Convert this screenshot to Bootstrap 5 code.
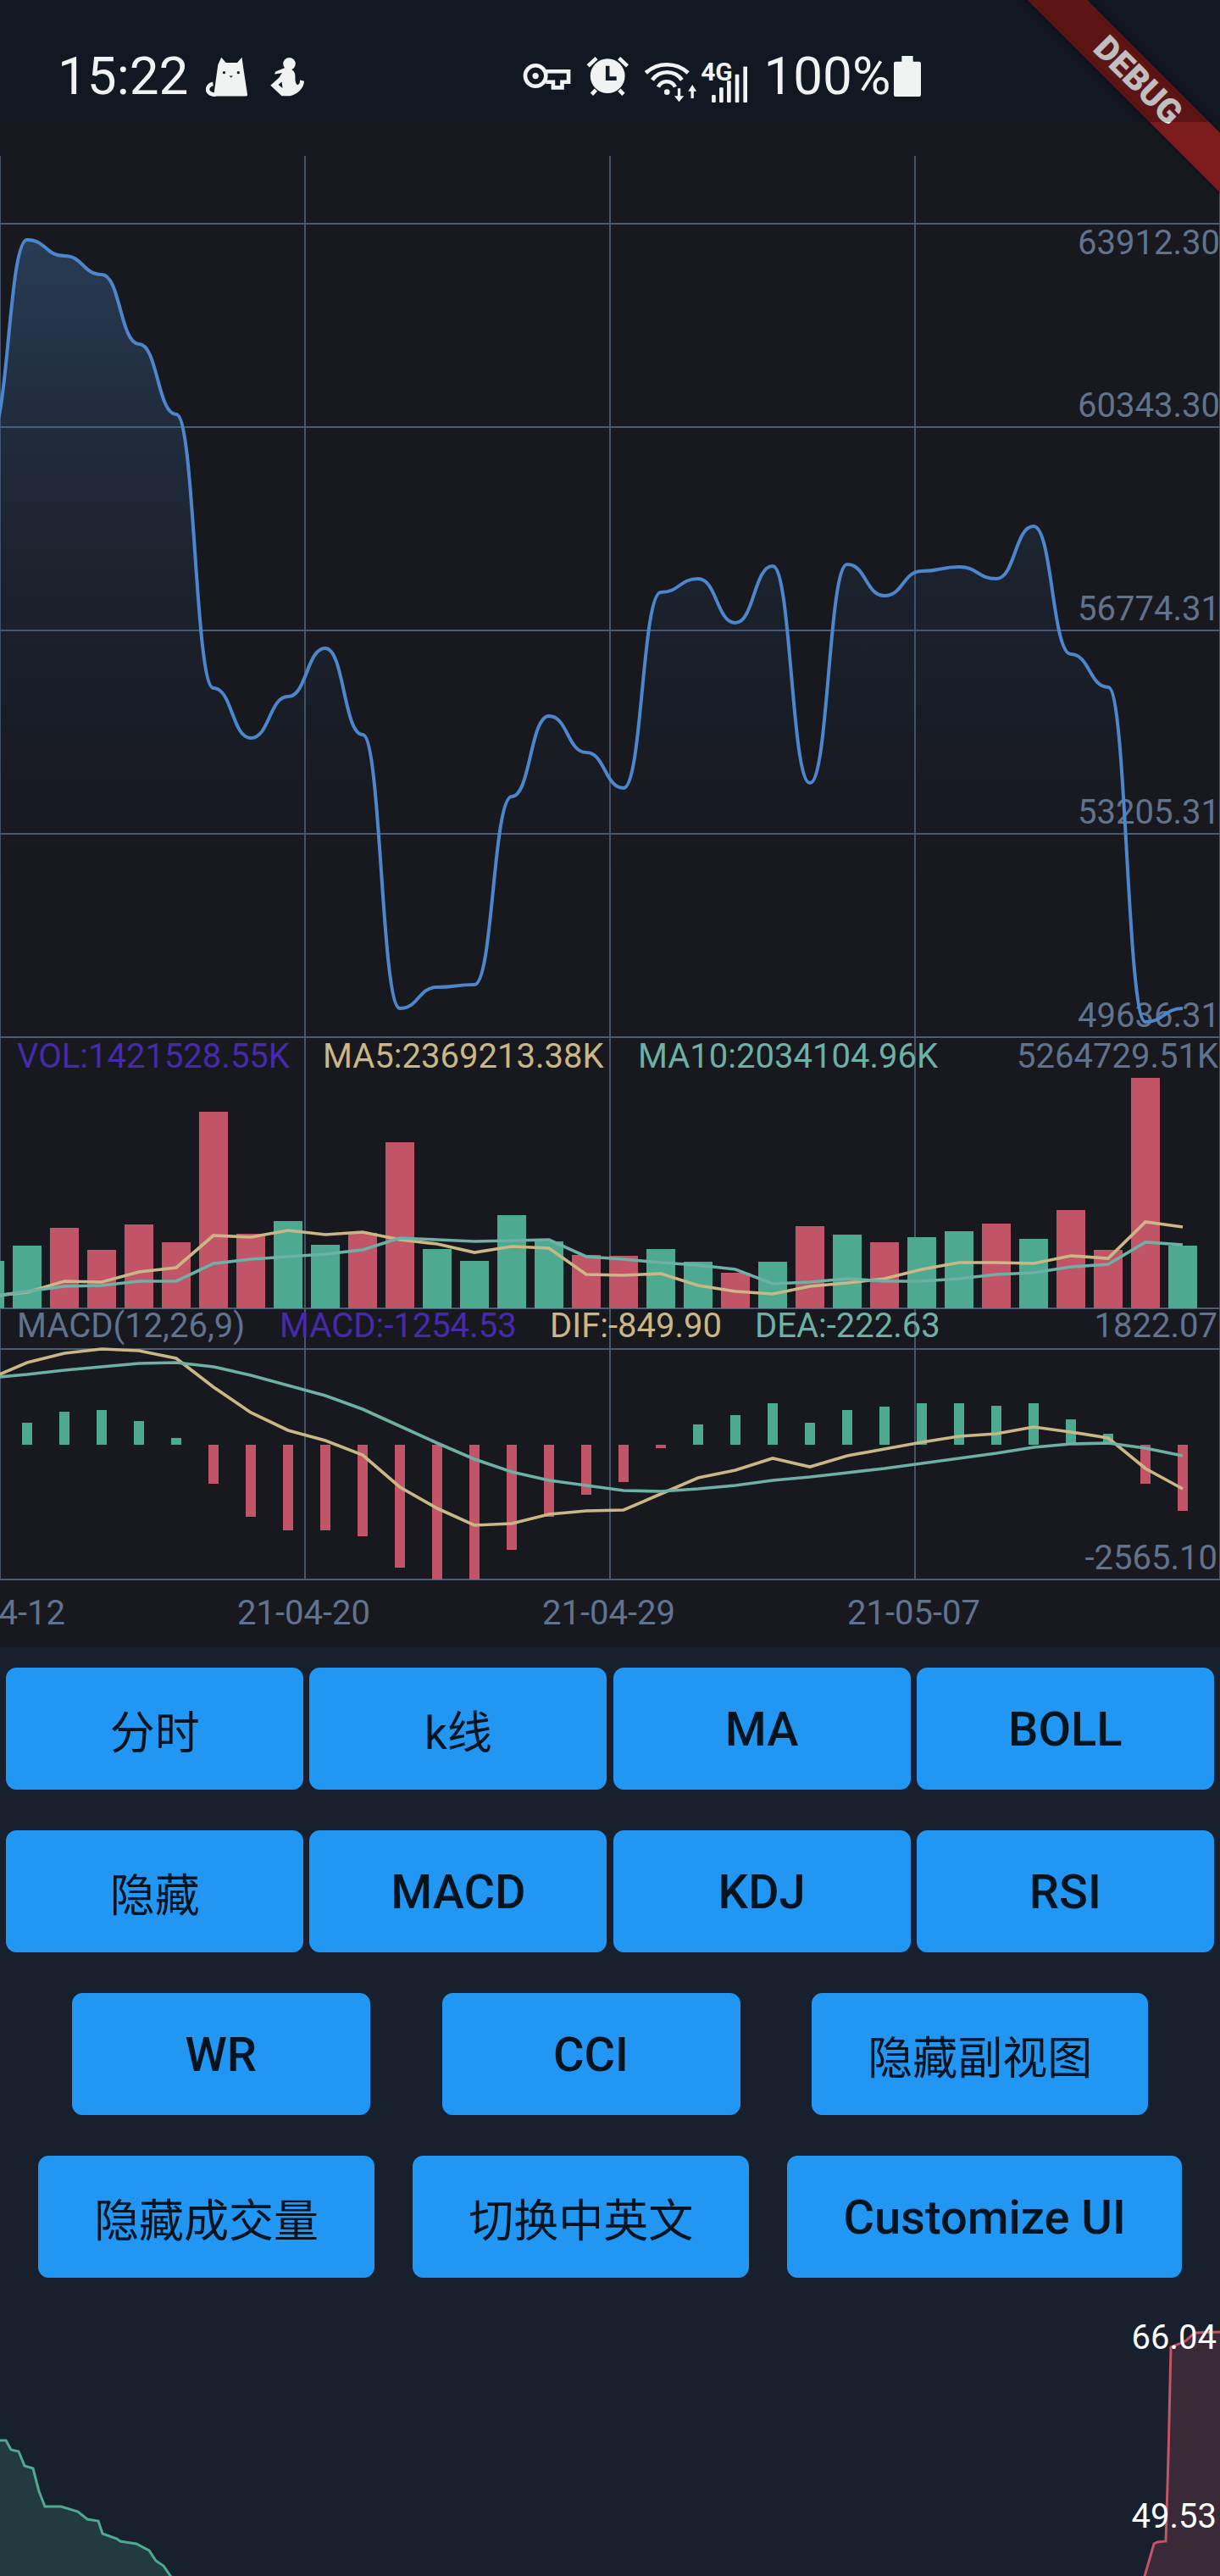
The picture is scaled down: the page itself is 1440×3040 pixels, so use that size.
<!DOCTYPE html>
<html lang="zh-CN">
<head>
    <meta charset="UTF-8">
    <meta name="viewport" content="width=device-width, initial-scale=1.0">
    <title>K Chart</title>
    <link href="https://cdn.jsdelivr.net/npm/bootstrap@5.3.3/dist/css/bootstrap.min.css" rel="stylesheet">
    <style>
        body {
            background-color: #18202e;
            margin: 0;
            font-family: Roboto, "Noto Sans CJK SC", sans-serif;
        }

        .app-shell {
            width: 1440px;
            height: 3040px;
            overflow: hidden;
        }

        /* Status bar is a scrim over the page, the ribbon sits below it */
        .status-row {
            height: 144px;
            padding: 36px 0 0 68px;
            background-color: rgba(0, 0, 0, .25);
            color: #f1f2f2;
            z-index: 3;
        }

        .status-text {
            font-size: 62px;
            line-height: 1;
        }

        .status-row svg {
            display: block;
            fill: #f1f2f2;
        }

        .ico-stroke {
            fill: none !important;
            stroke: #f1f2f2;
            stroke-width: 14;
        }

        .net-label {
            font-size: 90px;
            font-weight: 700;
        }

        .ico-cat { width: 50px; height: 49px; margin-left: 21px; }
        .ico-yoga { width: 41px; height: 47px; margin-left: 26px; }
        .ico-key { width: 57px; height: 32px; margin-left: 257px; }
        .ico-alarm { width: 52px; height: 48px; margin-left: 18px; }
        .ico-net { width: 123px; height: 56px; margin: 7px 18px 0 16px; }
        .ico-battery { width: 32px; height: 48px; margin-left: 4px; }

        /* Debug ribbon */
        .debug-ribbon {
            left: 1143px;
            top: 70px;
            width: 400px;
            height: 50px;
            transform: rotate(45deg);
            background-color: #7c1b1c;
            box-shadow: 0 0 6px rgba(0, 0, 0, .5);
            color: #fff;
            font-size: 40px;
            font-weight: 900;
            line-height: 50px;
            text-align: center;
            z-index: 2;
        }

        /* K line chart */
        .kline-chart {
            display: block;
            width: 1440px;
            height: 1800px;
            background-color: #18191e;
        }

        .kline-chart text,
        .depth-chart text {
            font-family: Roboto, sans-serif;
            font-size: 40px;
        }

        .grid-line { stroke: #4c5c74; stroke-width: 1.8; }
        .main-line { fill: none; stroke: #4c86cd; stroke-width: 4; }
        .ma5-line { fill: none; stroke: #c9b885; stroke-width: 3.7; }
        .ma10-line { fill: none; stroke: #6cb0a6; stroke-width: 3.7; }

        .bar-up { fill: #c15466; }
        .bar-down { fill: #4daa90; }

        .t-gray { fill: #60738e; }
        .t-vol { fill: #4729ae; }
        .t-ma5 { fill: #c9b885; }
        .t-ma10 { fill: #6cb0a6; }

        /* Buttons */
        .btn-area {
            padding-top: 24px;
        }

        .btn-row {
            height: 144px;
            margin-bottom: 48px;
        }

        .btn-row-even {
            gap: 7.3px;
            padding: 0 7.3px;
        }

        .btn-kline {
            --bs-btn-bg: #2196f3;
            --bs-btn-border-color: #2196f3;
            --bs-btn-color: #04141f;
            --bs-btn-hover-bg: #2196f3;
            --bs-btn-hover-border-color: #2196f3;
            --bs-btn-hover-color: #04141f;
            --bs-btn-border-radius: 12px;
            min-width: 352px;
            padding: 2px 65px 0;
            font-size: 56px;
            font-weight: 500;
            line-height: 1;
        }

        .btn-row-even .btn-kline {
            min-width: 0;
            flex: 1 1 0;
            padding: 2px 0 0;
        }

        .btn-kline.cjk-label,
        .btn-row-even .btn-kline.cjk-label {
            font-size: 53px;
            font-weight: 400;
            padding-top: 13px;
        }

        /* Depth chart */
        .depth-chart {
            display: block;
            width: 1440px;
            height: 352px;
        }

        .depth-buy { fill: rgba(77, 170, 144, .2); stroke: #4daa90; stroke-width: 3; }
        .depth-sell { fill: rgba(193, 84, 102, .2); stroke: #c15466; stroke-width: 3; }
    </style>
</head>
<body>
<div class="app-shell position-relative">

    <!-- Status bar -->
    <div class="status-row position-relative d-flex align-items-center">
        <span class="status-text">15:22</span>
        <svg class="ico-cat" viewBox="604 100 154 146">
            <path d="M660 103L677 122H718L735 103L740 140L755 238Q756 244 750 244H640Q632 244 633 238L648 130Z"/>
            <path class="ico-stroke" d="M640 238C618 240 606 225 612 212C615 205 622 200 630 199"/>
            <circle cx="670" cy="158" r="5" fill="#121a24"/>
            <circle cx="722" cy="158" r="5" fill="#121a24"/>
            <path d="M689 170H702L696 177Z" fill="#121a24"/>
        </svg>
        <svg class="ico-yoga" viewBox="838 103 122 142">
            <circle cx="905" cy="128" r="22"/>
            <path d="M892 146C915 142 928 155 926 178C925 190 930 205 936 203C942 200 943 192 943 186L958 190C957 215 935 236 908 243H878L838 205L868 178L880 160Z"/>
            <path d="M893 141L856 156L852 165L888 160Z"/>
            <path d="M866 203L878 192L881 215Z" fill="#121a24"/>
        </svg>
        <svg class="ico-key" viewBox="50 126 171 97">
            <circle class="ico-stroke" cx="95" cy="173" r="37"/>
            <circle cx="95" cy="173" r="11"/>
            <path class="ico-stroke" d="M132 157H213V195H190V215H158V195H132"/>
        </svg>
        <svg class="ico-alarm" viewBox="277 100 155 146">
            <circle cx="352" cy="172" r="62"/>
            <path d="M345 136H359V174H384V188H345Z" fill="#121a24"/>
            <path class="ico-stroke" d="M282 136L312 108M393 108L423 136M295 238L310 222M409 238L394 222"/>
        </svg>
        <svg class="ico-net" viewBox="480 80 370 168">
            <path class="ico-stroke" d="M487 140A110 110 0 0 1 637 140M510 165A64 64 0 0 1 615 165M531 190A33 33 0 0 1 591 190"/>
            <circle cx="562" cy="208" r="10"/>
            <path d="M600 195H610V222H622L605 243L588 222H600Z"/>
            <path d="M647 230H657V205H667L652 182L637 205H647Z"/>
            <text class="net-label" x="682" y="168" fill="#f1f2f2">4G</text>
            <rect x="721" y="218" width="14" height="27" rx="3"/>
            <rect x="748" y="192" width="14" height="53" rx="3"/>
            <rect x="775" y="168" width="14" height="77" rx="3"/>
            <rect x="804" y="145" width="14" height="100" rx="3"/>
            <rect x="833" y="117" width="14" height="128" rx="3"/>
        </svg>
        <span class="status-text">100%</span>
        <svg class="ico-battery" viewBox="1365 102 96 144">
            <path d="M1393 102H1433V122H1455Q1461 122 1461 128V240Q1461 246 1455 246H1371Q1365 246 1365 240V128Q1365 122 1371 122H1393Z"/>
        </svg>
    </div>

    <div class="debug-ribbon position-absolute">DEBUG</div>

    <!-- K line chart -->
    <svg class="kline-chart" viewBox="0 144 1440 1800">
        <defs>
            <linearGradient id="mainShade" gradientUnits="userSpaceOnUse" x1="0" y1="264" x2="0" y2="1224">
                <stop offset="0" stop-color="#4c86cd" stop-opacity=".33"/>
                <stop offset="1" stop-color="#000" stop-opacity="0"/>
            </linearGradient>
        </defs>
        <g id="gridLayer"></g>
        <path id="mainArea" fill="url(#mainShade)"/>

        <text class="t-gray" x="1440" y="300" text-anchor="end">63912.30</text>
        <text class="t-gray" x="1440" y="492" text-anchor="end">60343.30</text>
        <text class="t-gray" x="1440" y="732" text-anchor="end">56774.31</text>
        <text class="t-gray" x="1440" y="972" text-anchor="end">53205.31</text>
        <text class="t-gray" x="1440" y="1212" text-anchor="end">49636.31</text>

        <path id="mainLine" class="main-line"/>

        <text class="t-vol" x="20" y="1260">VOL:1421528.55K</text>
        <text class="t-ma5" x="381" y="1260">MA5:2369213.38K</text>
        <text class="t-ma10" x="753" y="1260">MA10:2034104.96K</text>
        <text class="t-gray" x="1438" y="1260" text-anchor="end">5264729.51K</text>

        <text class="t-gray" x="20" y="1578">MACD(12,26,9)</text>
        <text class="t-vol" x="330" y="1578">MACD:-1254.53</text>
        <text class="t-ma5" x="649" y="1578">DIF:-849.90</text>
        <text class="t-ma10" x="891" y="1578">DEA:-222.63</text>
        <text class="t-gray" x="1437" y="1578" text-anchor="end">1822.07</text>
        <text class="t-gray" x="1437" y="1852" text-anchor="end">-2565.10</text>

        <g id="volBars"></g>
        <polyline id="volMa5" class="ma5-line"/>
        <polyline id="volMa10" class="ma10-line"/>
        <g id="macdBars"></g>
        <polyline id="macdDif" class="ma5-line"/>
        <polyline id="macdDea" class="ma10-line"/>

        <text class="t-gray" x="77" y="1917" text-anchor="end">4-12</text>
        <text class="t-gray" x="358.5" y="1917" text-anchor="middle">21-04-20</text>
        <text class="t-gray" x="718.5" y="1917" text-anchor="middle">21-04-29</text>
        <text class="t-gray" x="1078.5" y="1917" text-anchor="middle">21-05-07</text>
    </svg>

    <!-- Buttons -->
    <div class="btn-area">
        <div class="btn-row btn-row-even d-flex">
            <button type="button" class="btn btn-kline cjk-label">分时</button>
            <button type="button" class="btn btn-kline cjk-label">k线</button>
            <button type="button" class="btn btn-kline">MA</button>
            <button type="button" class="btn btn-kline">BOLL</button>
        </div>
        <div class="btn-row btn-row-even d-flex">
            <button type="button" class="btn btn-kline cjk-label">隐藏</button>
            <button type="button" class="btn btn-kline">MACD</button>
            <button type="button" class="btn btn-kline">KDJ</button>
            <button type="button" class="btn btn-kline">RSI</button>
        </div>
        <div class="btn-row d-flex justify-content-evenly">
            <button type="button" class="btn btn-kline">WR</button>
            <button type="button" class="btn btn-kline">CCI</button>
            <button type="button" class="btn btn-kline cjk-label">隐藏副视图</button>
        </div>
        <div class="btn-row d-flex justify-content-evenly mb-0">
            <button type="button" class="btn btn-kline cjk-label">隐藏成交量</button>
            <button type="button" class="btn btn-kline cjk-label">切换中英文</button>
            <button type="button" class="btn btn-kline">Customize UI</button>
        </div>
    </div>

    <!-- Depth chart -->
    <svg class="depth-chart" viewBox="0 2688 1440 352">
        <path class="depth-buy" d="M-4 3044V2880H7L13 2891L22 2893L29 2910L39 2913L46 2940L53 2958H72L92 2964L103 2973L116 2975L121 2990L138 2996L142 2999L161 3002L176 3010L184 3022L193 3028L204 3044Z"/>
        <path class="depth-sell" d="M1350 3044L1362 3002L1366 3000L1376 2999L1379 2900L1382 2770L1392 2766L1400 2762L1410 2753L1444 2752V3044Z"/>
        <text x="1436" y="2772" text-anchor="end" fill="#fff">66.04</text>
        <text x="1436" y="2983" text-anchor="end" fill="#fff">49.53</text>
    </svg>
</div>

<script src="https://cdn.jsdelivr.net/npm/bootstrap@5.3.3/dist/js/bootstrap.bundle.min.js"></script>
<script>
    const SVG_NS = 'http://www.w3.org/2000/svg';

    // Candles sit every 44px, the first one starts off screen
    const xAt = (i) => -12 + 44 * i;

    const closeY = [515, 283, 302, 324, 406, 489, 812, 871, 822, 765, 867, 1190, 1165, 1162, 940, 845, 888,
        930, 699, 683, 735, 668, 924, 666, 703, 674, 669, 683, 621, 772, 811, 1206, 1190];

    const volTop = [1488, 1470, 1449, 1475, 1445, 1466, 1312, 1456, 1441, 1469, 1455, 1348, 1474, 1488, 1434, 1465, 1481,
        1482, 1474, 1489, 1502, 1489, 1447, 1457, 1466, 1460, 1453, 1444, 1462, 1428, 1475, 1272, 1470];
    const volUp = [0, 0, 1, 1, 1, 1, 1, 1, 0, 0, 1, 1, 0, 0, 0, 0, 1,
        1, 0, 0, 1, 0, 1, 0, 1, 0, 0, 1, 0, 1, 1, 1, 0];
    const volMa5 = [1530, 1525, 1512, 1513, 1501, 1496, 1458, 1460, 1452, 1457, 1454, 1463, 1468, 1478, 1471, 1473, 1504,
        1505, 1503, 1517, 1524, 1527, 1518, 1514, 1509, 1498, 1490, 1490, 1491, 1482, 1485, 1442, 1448];
    const volMa10 = [1530, 1524, 1518, 1517, 1512, 1512, 1491, 1486, 1483, 1480, 1475, 1461, 1463, 1465, 1464, 1463, 1483,
        1486, 1490, 1493, 1498, 1515, 1513, 1509, 1512, 1512, 1509, 1504, 1502, 1495, 1492, 1466, 1469];

    // End of each MACD bar, it starts from the zero line
    const MACD_ZERO = 1705;
    const macdEnd = [1705, 1679, 1666, 1664, 1677, 1697, 1751, 1790, 1806, 1806, 1813, 1850, 1864, 1864, 1829, 1790, 1764,
        1749, 1709, 1681, 1670, 1656, 1679, 1664, 1660, 1656, 1656, 1659, 1656, 1675, 1692, 1751, 1783];
    const macdDif = [1627, 1608, 1597, 1592, 1594, 1603, 1637, 1667, 1688, 1700, 1717, 1755, 1780, 1800, 1798, 1787, 1783,
        1782, 1763, 1744, 1735, 1721, 1731, 1718, 1710, 1702, 1695, 1692, 1684, 1690, 1697, 1733, 1757];
    const macdDea = [1626, 1622, 1617, 1613, 1609, 1608, 1613, 1623, 1635, 1647, 1663, 1683, 1703, 1722, 1737, 1747, 1753,
        1759, 1760, 1757, 1753, 1747, 1743, 1738, 1733, 1727, 1721, 1715, 1708, 1704, 1703, 1709, 1718];

    function addRect(parent, x, y, w, h, cls) {
        const r = document.createElementNS(SVG_NS, 'rect');
        r.setAttribute('x', x);
        r.setAttribute('y', y);
        r.setAttribute('width', w);
        r.setAttribute('height', h);
        r.setAttribute('class', cls);
        parent.appendChild(r);
    }

    function addLine(parent, x1, y1, x2, y2) {
        const l = document.createElementNS(SVG_NS, 'line');
        l.setAttribute('x1', x1);
        l.setAttribute('y1', y1);
        l.setAttribute('x2', x2);
        l.setAttribute('y2', y2);
        l.setAttribute('class', 'grid-line');
        parent.appendChild(l);
    }

    function toPoints(values) {
        return values.map((y, i) => xAt(i) + ',' + y).join(' ');
    }

    // Grid
    const gridLayer = document.getElementById('gridLayer');
    [264, 504, 744, 984, 1224, 1544, 1592, 1864].forEach((y) => addLine(gridLayer, 0, y, 1440, y));
    [0, 360, 720, 1080, 1440].forEach((x) => addLine(gridLayer, x, 184, x, 1864));

    // Main line, horizontal tangents at each close
    let d = 'M' + xAt(0) + ' ' + closeY[0];
    for (let i = 1; i < closeY.length; i++) {
        const mid = (xAt(i - 1) + xAt(i)) / 2;
        d += 'C' + mid + ' ' + closeY[i - 1] + ' ' + mid + ' ' + closeY[i] + ' ' + xAt(i) + ' ' + closeY[i];
    }
    document.getElementById('mainLine').setAttribute('d', d);
    document.getElementById('mainArea').setAttribute('d', d + 'V1224H' + xAt(0) + 'Z');

    // Volume
    const volBars = document.getElementById('volBars');
    volTop.forEach((top, i) => {
        addRect(volBars, xAt(i) - 17, top, 34, 1544 - top, volUp[i] ? 'bar-up' : 'bar-down');
    });
    document.getElementById('volMa5').setAttribute('points', toPoints(volMa5));
    document.getElementById('volMa10').setAttribute('points', toPoints(volMa10));

    // MACD
    const macdBars = document.getElementById('macdBars');
    macdEnd.forEach((end, i) => {
        if (end < MACD_ZERO) {
            addRect(macdBars, xAt(i) - 6, end, 12, MACD_ZERO - end, 'bar-down');
        } else if (end > MACD_ZERO) {
            addRect(macdBars, xAt(i) - 6, MACD_ZERO, 12, end - MACD_ZERO, 'bar-up');
        }
    });
    document.getElementById('macdDif').setAttribute('points', toPoints(macdDif));
    document.getElementById('macdDea').setAttribute('points', toPoints(macdDea));
</script>
</body>
</html>
